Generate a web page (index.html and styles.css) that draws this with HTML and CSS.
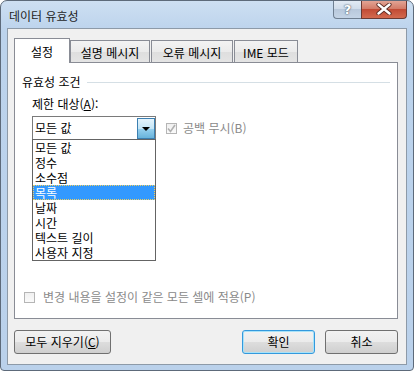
FILE: index.html
```html
<!DOCTYPE html>
<html lang="ko">
<head>
    <meta charset="UTF-8">
    <title>데이터 유효성</title>
    <link rel="stylesheet" href="styles.css">
</head>
<body>
    <div class="window">
        <div class="titlebar">
            <span class="title">데이터 유효성</span>
            <div class="caption">
                <div class="cap-btn help">?</div>
                <div class="cap-btn close">
                    <svg width="18" height="12" viewBox="0 0 18 12">
                        <path d="M3.5 1.5 L14.5 10.5 M14.5 1.5 L3.5 10.5" stroke="#5a2a22" stroke-width="4.2" stroke-linecap="round"/>
                        <path d="M3.5 1.5 L14.5 10.5 M14.5 1.5 L3.5 10.5" stroke="#fff" stroke-width="2.4" stroke-linecap="round"/>
                    </svg>
                </div>
            </div>
        </div>

        <div class="client">
            <div class="tabs">
                <div class="tab active">설정</div>
                <div class="tab t2">설명 메시지</div>
                <div class="tab t3">오류 메시지</div>
                <div class="tab t4">IME 모드</div>
            </div>

            <div class="panel">
                <div class="group-title">
                    <span>유효성 조건</span>
                    <div class="group-line"></div>
                </div>

                <div class="field-label">제한 대상(<u>A</u>):</div>
                <div class="field-row">
                    <div class="combo">
                        <span class="combo-value">모든 값</span>
                        <div class="combo-btn"><span class="arrow"></span></div>
                        <ul class="droplist">
                            <li>모든 값</li>
                            <li>정수</li>
                            <li>소수점</li>
                            <li class="selected">목록</li>
                            <li>날짜</li>
                            <li>시간</li>
                            <li>텍스트 길이</li>
                            <li>사용자 지정</li>
                        </ul>
                    </div>
                    <label class="check disabled">
                        <span class="box">
                            <svg width="9" height="9" viewBox="0 0 9 9"><path d="M1 4.5 L3.5 7.5 L8 1" stroke="#b0b0b0" stroke-width="1.6" fill="none"/></svg>
                        </span>
                        공백 무시(B)
                    </label>
                </div>

                <div class="spacer"></div>

                <label class="check disabled apply">
                    <span class="box"></span>
                    변경 내용을 설정이 같은 모든 셀에 적용(P)
                </label>
            </div>

            <div class="buttons">
                <button class="btn clear">모두 지우기(<u>C</u>)</button>
                <button class="btn default">확인</button>
                <button class="btn">취소</button>
            </div>
        </div>
    </div>
</body>
</html>
```

FILE: styles.css
```css
body { margin: 0; font-family: "Noto Sans CJK KR", "Noto Sans", sans-serif; font-size: 12px; color: #000; background: #fff; }
u { text-decoration: underline; text-underline-offset: 1px; }

.window { width: 414px; height: 371px; box-sizing: border-box; border: 1px solid #5d6a7a; border-radius: 7px 7px 4px 4px; background: linear-gradient(#cddff2, #bcd3ec 30px, #bad1eb); display: flex; flex-direction: column; overflow: hidden; }

.titlebar { height: 27px; display: flex; align-items: flex-start; flex-shrink: 0; }
.title { padding: 7px 0 0 8px; line-height: 16px; color: #1e1e1e; }
.caption { margin-left: auto; margin-right: 6px; margin-top: -1px; display: flex; }
.cap-btn { height: 19px; box-sizing: border-box; border: 1px solid #6f7f91; border-top: none; display: flex; align-items: center; justify-content: center; }
.help { width: 28px; border-radius: 0 0 0 4px; border-right: none; background: linear-gradient(#e4ecf5, #d0dcea 50%, #b8c8db 51%, #c4d4e6); color: #fff; font-family: "DejaVu Sans", sans-serif; font-weight: bold; font-size: 13px; text-shadow: 0 0 2px #4a5a6c, 0 0 1px #4a5a6c; }
.close { width: 46px; border-radius: 0 0 4px 0; border-color: #6b3a33; background: linear-gradient(#e5a99a, #d27a66 50%, #c14a34 51%, #d36a4f); }

.client { flex: 1; margin: 0 6px 5px 6px; border: 1px solid #8d9aa8; background: #f0f0f0; padding: 9px 8px 0 6px; display: flex; flex-direction: column; }

.tabs { display: flex; align-items: flex-end; gap: 1px; height: 24px; position: relative; z-index: 1; }
.tab { height: 22px; box-sizing: border-box; border: 1px solid #898c95; border-bottom: none; background: linear-gradient(#f3f3f3, #ebebeb 50%, #dedede 51%, #e4e4e4); display: flex; align-items: center; justify-content: center; line-height: 14px; padding-top: 2px; }
.tab.active { width: 56px; height: 25px; margin-bottom: -1px; background: #fff; padding-top: 1px; }
.t2 { width: 80px; margin-left: -1px; }
.t3 { width: 82px; }
.t4 { width: 64px; }

.panel { height: 257px; box-sizing: border-box; border: 1px solid #898c95; background: #fff; padding: 11px 7px 13px 7px; display: flex; flex-direction: column; }

.group-title { display: flex; align-items: center; gap: 6px; line-height: 16px; }
.group-line { flex: 1; height: 1px; background: #d5dfe5; margin-top: 1px; }

.field-label { margin: 6px 0 0 10px; line-height: 16px; }
.field-row { display: flex; align-items: flex-start; margin: 4px 0 0 10px; gap: 10px; }

.combo { width: 124px; height: 23px; box-sizing: border-box; border: 1px solid #7a7a7a; border-bottom: none; background: #fff; display: flex; align-items: center; position: relative; }
.combo-value { flex: 1; padding-left: 2px; line-height: 16px; }
.combo-btn { width: 18px; height: 21px; box-sizing: border-box; border: 1px solid #3c7fb1; background: linear-gradient(#e5f4fc, #c4e5f6 50%, #98d1ef 51%, #68b3db); display: flex; align-items: center; justify-content: center; }
.arrow { width: 0; height: 0; border-left: 4px solid transparent; border-right: 4px solid transparent; border-top: 4px solid #000; margin-top: 2px; }

.droplist { position: absolute; left: -1px; top: 22px; width: 124px; box-sizing: border-box; margin: 0; padding: 0; list-style: none; border: 1px solid #646464; background: #fff; z-index: 5; }
.droplist li { height: 15px; line-height: 15px; padding-left: 2px; box-sizing: border-box; overflow: hidden; }
.droplist li.selected { background: #3399ff; color: #fff; outline: 1px dotted #f0d060; outline-offset: -1px; }

.check { display: flex; align-items: center; gap: 6px; line-height: 16px; }
.check.disabled { color: #8a8a8a; }
.field-row .check { margin-top: 4px; }
.box { width: 11px; height: 11px; box-sizing: border-box; border: 1px solid #b5b5b5; background: linear-gradient(#f0f0f0, #fafafa); display: flex; align-items: center; justify-content: center; }

.spacer { flex: 1; }
.apply { margin-left: 2px; gap: 8px; }

.buttons { display: flex; margin-top: 11px; gap: 10px; }
.btn { height: 24px; width: 73px; box-sizing: border-box; border: 1px solid #707070; border-radius: 3px; background: linear-gradient(#f2f2f2, #ebebeb 50%, #dddddd 51%, #cfcfcf); font-family: inherit; font-size: 12px; padding: 0; line-height: 14px; color: #000; }
.btn.clear { width: 97px; margin-right: auto; }
.btn.default { border-color: #3399dd; box-shadow: inset 0 0 0 1px #a8e2f8; }
```
